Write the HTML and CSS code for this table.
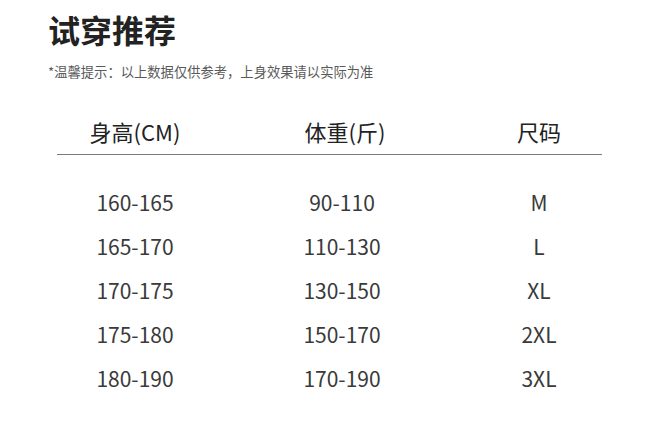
FILE: index.html
```html
<!DOCTYPE html>
<html lang="zh-CN">
<head>
<meta charset="utf-8">
<link rel="stylesheet" href="styles.css">
</head>
<body>
<div class="page">
  <h1 class="title">试穿推荐</h1>
  <p class="note">*温馨提示：以上数据仅供参考，上身效果请以实际为准</p>
  <div class="table">
    <div class="row head">
      <div class="c1">身高(CM)</div>
      <div class="c2">体重(斤)</div>
      <div class="c3">尺码</div>
    </div>
    <div class="body">
      <div class="row"><div class="c1">160-165</div><div class="c2">90-110</div><div class="c3">M</div></div>
      <div class="row"><div class="c1">165-170</div><div class="c2">110-130</div><div class="c3">L</div></div>
      <div class="row"><div class="c1">170-175</div><div class="c2">130-150</div><div class="c3">XL</div></div>
      <div class="row"><div class="c1">175-180</div><div class="c2">150-170</div><div class="c3">2XL</div></div>
      <div class="row"><div class="c1">180-190</div><div class="c2">170-190</div><div class="c3">3XL</div></div>
    </div>
  </div>
</div>
</body>
</html>
```

FILE: styles.css
```css
html, body {
  margin: 0;
  padding: 0;
  background: #ffffff;
}
body {
  font-family: "Noto Sans CJK SC", "Noto Sans", sans-serif;
  color: #333;
}
.page {
  padding: 12px 0 0 48px;
}
.title {
  margin: 0;
  font-size: 32px;
  line-height: 34px;
  font-weight: 700;
  color: #222;
}
.note {
  margin: 16px 0 0 0;
  font-size: 13.3px;
  line-height: 20px;
  color: #5a5a5a;
}
.table {
  margin: 26px 0 0 9px;
  width: 545px;
}
.row {
  display: grid;
  grid-template-columns: 156px 258px 131px;
  text-align: center;
  font-size: 21px;
  line-height: 44px;
  color: #3a3a3a;
}
.head {
  color: #222;
  font-size: 22px;
  line-height: 46px;
  border-bottom: 1.5px solid #7a7a7a;
}
.head .c2 {
  padding-left: 6px;
}
.c3 {
  padding-left: 5px;
}
.body {
  padding-top: 25px;
}
```
